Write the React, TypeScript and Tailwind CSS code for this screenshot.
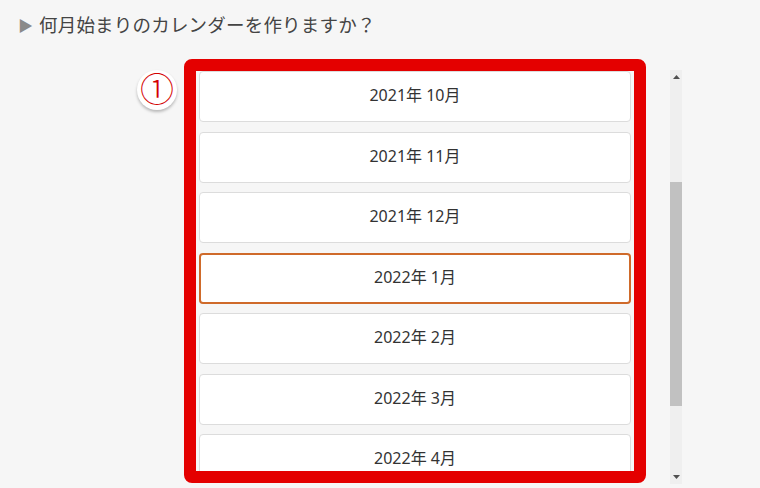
import React from 'react';

const months = [
  '2021年 10月',
  '2021年 11月',
  '2021年 12月',
  '2022年 1月',
  '2022年 2月',
  '2022年 3月',
  '2022年 4月',
];

export default function App() {
  return (
    <div
      className="w-[760px] h-[488px] overflow-hidden bg-[#f6f6f6] text-[#333]"
      style={{ fontFamily: '"Noto Sans", "Noto Sans CJK JP", sans-serif' }}
    >
      <div className="h-[50px] flex items-center pl-[18px] gap-[6px]">
        <span className="text-[15px] text-[#8a8a8a] leading-none">▶</span>
        <span className="text-[18.5px] text-[#444] tracking-[0.2px]">何月始まりのカレンダーを作りますか？</span>
      </div>

      <div className="flex items-start mt-[9px] pl-[137px]">
        <div className="mt-[11px] w-[40px] h-[40px] rounded-full bg-white shadow-[0_2px_3px_rgba(0,0,0,0.25)] flex items-center justify-center">
          <span className="text-[#d40000] text-[34px] font-light leading-none -mt-[3px]">①</span>
        </div>

        <div className="ml-[7px] w-[462px] h-[424px] border-[12px] border-[#e40000] rounded-[8px] bg-[#f6f6f6] overflow-hidden">
          <div className="flex flex-col gap-[9.5px] px-[3px]">
            {months.map((m) => {
              const selected = m === '2022年 1月';
              return (
                <div
                  key={m}
                  className={
                    selected
                      ? 'h-[51px] shrink-0 bg-white rounded-[4px] border-2 border-[#cf6a2a] flex items-center justify-center pb-[3px] text-[16px]'
                      : 'h-[51px] shrink-0 bg-white rounded-[4px] border border-[#dcdcdc] flex items-center justify-center pb-[3px] text-[16px]'
                  }
                >
                  {m}
                </div>
              );
            })}
          </div>
        </div>

        <div className="ml-[24px] mt-[11px] w-[12px] h-[414px] bg-[#efefef] flex flex-col items-center">
          <div className="h-[14px] flex items-center justify-center">
            <svg width="7" height="4" viewBox="0 0 7 4">
              <path d="M3.5 0 L7 4 L0 4 Z" fill="#505050" />
            </svg>
          </div>
          <div className="flex-1 w-full flex flex-col">
            <div className="h-[98px]" />
            <div className="h-[224px] w-full bg-[#c1c1c1]" />
          </div>
          <div className="h-[14px] flex items-center justify-center">
            <svg width="7" height="4" viewBox="0 0 7 4">
              <path d="M0 0 L7 0 L3.5 4 Z" fill="#505050" />
            </svg>
          </div>
        </div>
      </div>
    </div>
  );
}
